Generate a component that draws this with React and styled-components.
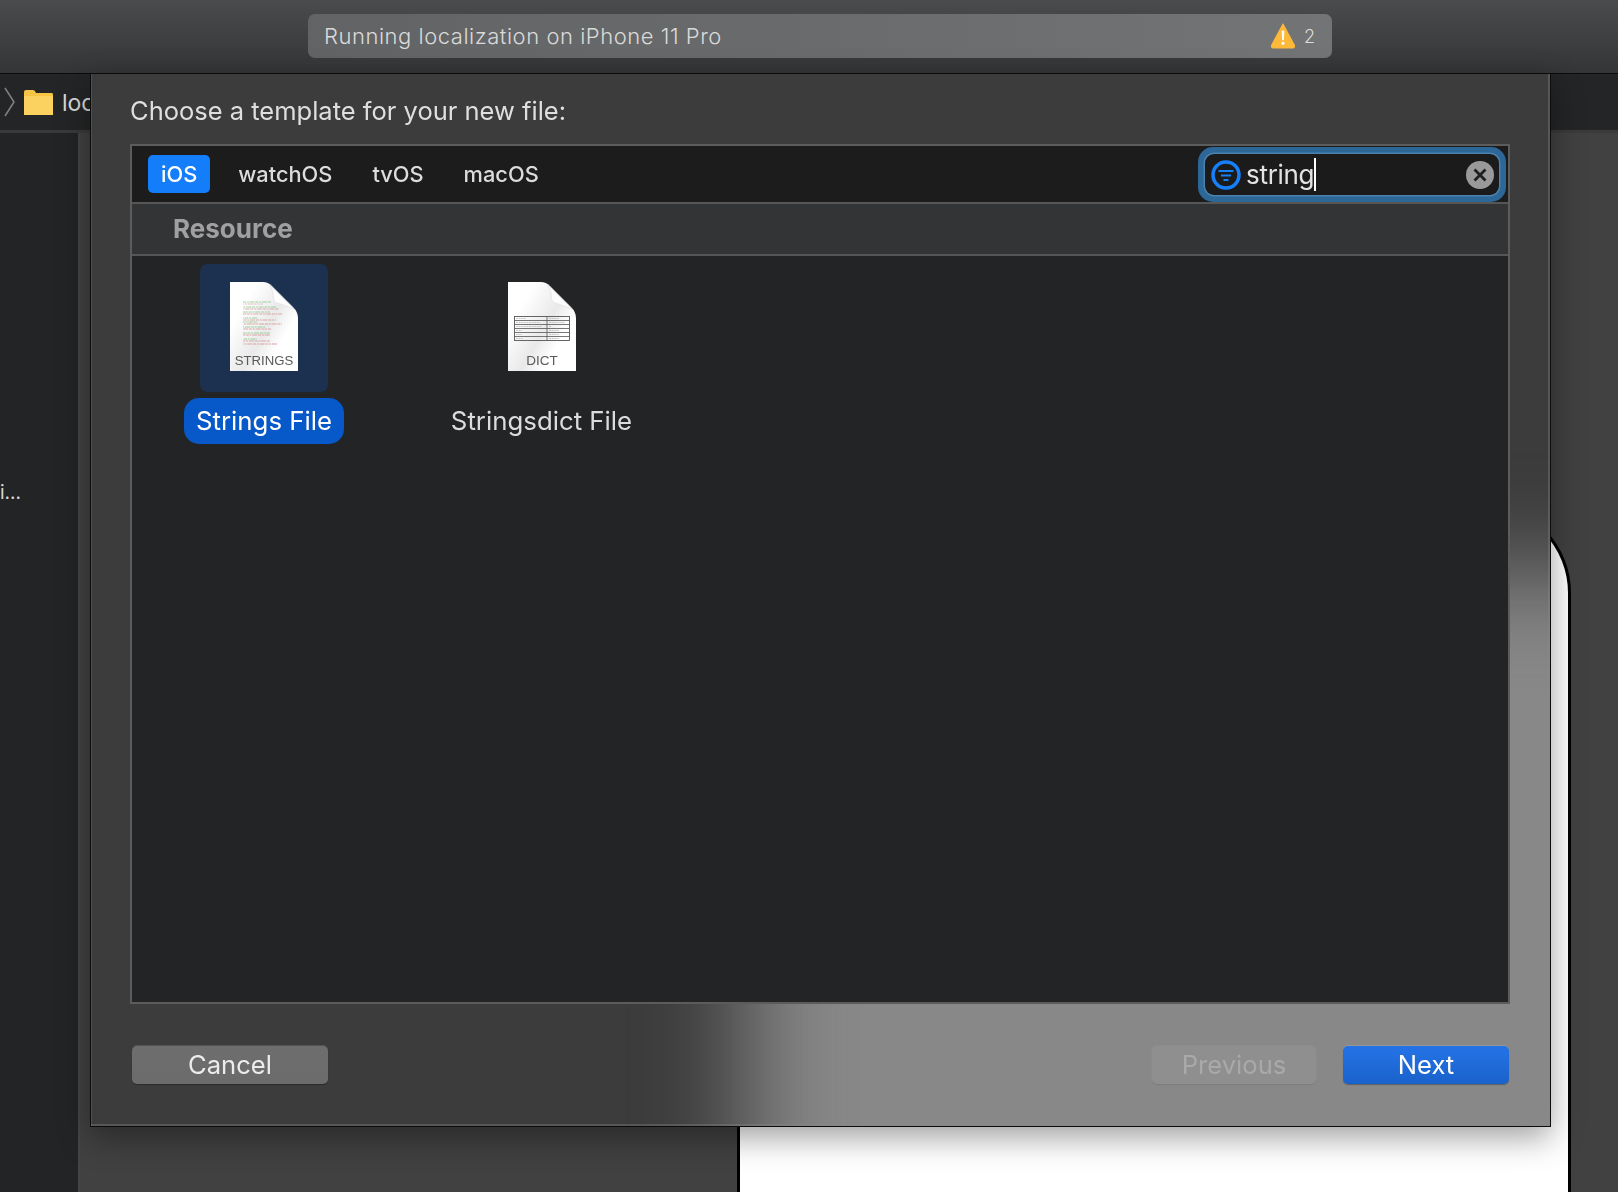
import React from "react";
import styled, { createGlobalStyle } from "styled-components";

const Global = createGlobalStyle`
  html, body { margin: 0; padding: 0; background: #414141; }
  body { font-family: Inter, "Noto Sans", "Liberation Sans", sans-serif; }
  * { box-sizing: border-box; }
`;

const Page = styled.div`
  width: 1618px; height: 1192px; display: flex; flex-direction: column; overflow: hidden; position: relative;
`;
const TitleBar = styled.header`
  height: 74px; flex: none; padding: 14px 0 0 308px;
  background: linear-gradient(180deg, #4a4b4d 0%, #3f4041 50%, #343536 100%);
  border-bottom: 1px solid #0c0c0c;
`;
const StatusPill = styled.div`
  width: 1024px; height: 44px; border-radius: 7px; display: flex; align-items: center;
  padding: 0 17px 0 16px; color: #dadada;
  background: linear-gradient(90deg, #626365 0%, #6a6b6c 50%, #737475 100%);
`;
const StatusText = styled.span`
  flex: 1; font-size: 22px; font-weight: 300; letter-spacing: 0.53px;
`;
const WarnCount = styled.span`
  font-size: 18px; font-weight: 300; margin-left: 8px; color: #dcdcdc;
`;
const Workspace = styled.main`
  flex: 1; display: flex; flex-direction: column; position: relative; min-height: 0;
`;
const PathBar = styled.nav`
  height: 59px; flex: none; display: flex; align-items: center; gap: 8px; padding: 0 0 0 4px;
  background: #242526; border-bottom: 3px solid #3a3a3b; color: #d8d8d8;
`;
const PathLabel = styled.span`
  font-size: 23px; font-weight: 400; margin-top: 2px;
`;
const Lower = styled.div`
  flex: 1; display: flex; min-height: 0;
`;
const Sidebar = styled.aside`
  width: 80px; flex: none; background: #232425; border-right: 2px solid #444546;
  color: #d8d8d8; font-size: 19px; padding-top: 348px; overflow: hidden; white-space: nowrap;
`;
const Canvas = styled.section`
  flex: 1; position: relative; background: #414141;
`;
const SideTab = styled.div`
  position: absolute; left: 1400px; top: 285px; width: 71px; height: 64px;
  background: #262626; border: 2px solid #5b5b5b; border-radius: 8px;
`;
const Device = styled.div`
  position: absolute; left: 657px; top: 370px; width: 834px; height: 900px;
  background: #fff; border: 3px solid #000; border-radius: 90px 90px 0 0;
`;
const Sheet = styled.div`
  position: absolute; left: 90px; top: 0; width: 1461px; height: 1053px;
  display: flex; flex-direction: column; overflow: hidden;
  padding: 0 40px 0 39px; background: #3c3c3c;
  border: 1px solid #0c0c0c; border-top: none;
  box-shadow: inset 0 -2px 0 rgba(255,255,255,.14), inset -2px 0 0 rgba(255,255,255,.14), inset 1px 0 0 rgba(255,255,255,.1);
  filter: drop-shadow(0 10px 16px rgba(0,0,0,.38));
  &::before {
    content: ""; position: absolute; left: 655px; top: 500px; width: 1100px; height: 900px;
    background: #888888; border-radius: 90px; filter: blur(50px);
  }
`;
const Heading = styled.h2`
  margin: 20px 0 16px; font-size: 25.5px; line-height: 34px; font-weight: 400; color: #dfdfdf;
`;
const Chooser = styled.div`
  flex: 1; position: relative; display: flex; flex-direction: column; min-height: 0;
  border: 2px solid #5c5c5d; background: #232426;
`;
const TabBar = styled.div`
  height: 58px; flex: none; display: flex; align-items: center; gap: 40px; padding: 0 2px 0 16px;
  background: #1c1c1d; border-bottom: 2px solid #565657;
`;
const Tab = styled.div`
  height: 38px; display: flex; align-items: center; font-size: 21.8px; font-weight: 500; border-radius: 5px;
  margin-top: -1px; color: ${p => (p.$active ? "#fff" : "#dcdcdc")};
  background: ${p => (p.$active ? "#147dfa" : "transparent")};
  padding: ${p => (p.$active ? "0 13px" : "0")};
  margin-right: ${p => (p.$active ? "-12px" : "0")};
`;
const Search = styled.div`
  margin-left: auto; width: 308px; height: 55px; flex: none; padding: 7px; border-radius: 15px;
  background: #2d6797; margin-top: 1px;
`;
const SearchInner = styled.div`
  height: 100%; display: flex; align-items: center; padding: 0 5px 0 6px;
  background: #1b1b1c; border-radius: 9px; box-shadow: 0 0 0 1.5px #4a82ad;
`;
const SearchText = styled.span`
  font-size: 26px; font-weight: 400; color: #e2e2e2; margin-left: 5px; letter-spacing: -0.3px;
  border-right: 2px solid #fff; line-height: 33px; margin-top: -1px;
`;
const Clear = styled.span`
  margin-left: auto; display: flex;
`;
const SectionRow = styled.div`
  height: 52px; flex: none; display: flex; align-items: center; padding: 0 0 2px 41px;
  background: #333436; border-bottom: 2px solid #565657;
  font-size: 26px; font-weight: 700; color: #a0a0a2;
`;
const Grid = styled.div`
  flex: 1; display: flex; align-items: flex-start; padding: 8px 0 0 52px;
`;
const Item = styled.div`
  width: ${p => p.$w}px; margin-right: ${p => p.$gap || 0}px; flex: none;
  display: flex; flex-direction: column; align-items: center;
`;
const IconTile = styled.div`
  width: 128px; height: 128px; display: flex; align-items: flex-start; justify-content: center; padding-top: 18px;
  border-radius: 7px; background: ${p => (p.$selected ? "#1c3150" : "transparent")};
`;
const ItemLabel = styled.div`
  margin-top: 6px; height: 46px; width: 100%; display: flex; align-items: center; justify-content: center;
  font-size: 25.8px; font-weight: 400; border-radius: 15px; white-space: nowrap; padding-bottom: 2px;
  color: ${p => (p.$selected ? "#fff" : "#dcdcdc")};
  background: ${p => (p.$selected ? "#0758c8" : "transparent")};
`;
const Footer = styled.footer`
  position: relative; display: flex; align-items: center; gap: 27px; padding: 42px 1px 42px 2px;
`;
const Btn = styled.button`
  width: ${p => p.$w}px; height: 38px; border: none; border-radius: 5px; font: inherit;
  font-size: 25.6px; font-weight: 400; padding: 0 0 2px;
  margin-left: ${p => (p.$push ? "auto" : "0")};
  color: ${p => ({ primary: "#fff", disabled: "#a9a9a9" }[p.$kind] || "#ececec")};
  background: ${p => ({
    primary: "linear-gradient(180deg,#2473e6,#1a62cb)",
    disabled: "#8f8f8f",
  }[p.$kind] || "linear-gradient(180deg,#6e6e6e,#6b6b6b)")};
  box-shadow: ${p => (p.$kind === "disabled"
    ? "0 0 0 1px rgba(255,255,255,.04), 0 1px 1px rgba(0,0,0,.12)"
    : "0 -1px 0 rgba(255,255,255,.12), 0 1px 1px rgba(0,0,0,.3)")};
`;

const Warn = () => (
  <svg width="26" height="26" viewBox="0 0 25 25">
    <path d="M12.500 1 L23.500 21.500 Q24 24 22 24 H3 Q1 24 1.500 21.500 Z" fill="#fdb93a" stroke="#fdb93a" strokeLinejoin="round" />
    <path d="M11.200 7.500 h2.600 l-.5 9 h-1.600 z" fill="#fff" />
    <circle cx="12.500" cy="19.500" r="1.500" fill="#fff" />
  </svg>
);
const Chevron = () => (
  <svg width="11" height="30" viewBox="0 0 11 30" fill="none">
    <path d="M1 1 L10 15 L1 29" stroke="#7e7e7f" strokeWidth="1.6" />
  </svg>
);
const Folder = () => (
  <svg width="31" height="27" viewBox="0 0 31 27">
    <path d="M1 3 Q1 1 3 1 H10 Q12 1 13 4 H29 Q30 4 30 6 V26 H1 Z" fill="#f7c544" />
    <rect x="1" y="7" width="29" height="19" rx="1" fill="#fbd25f" />
  </svg>
);
const FilterIcon = () => (
  <svg width="30" height="30" viewBox="0 0 30 30" fill="none" stroke="#1680fb">
    <circle cx="15" cy="15" r="13" strokeWidth="3.500" />
    <path d="M7.500 11 H22.500 M10 15.500 H20 M12.500 20 H17.500" strokeWidth="2" />
  </svg>
);
const ClearIcon = () => (
  <svg width="28" height="28" viewBox="0 0 28 28">
    <circle cx="14" cy="14" r="14" fill="#9a9a9a" />
    <path d="M8.500 8.500 L19.500 19.500 M19.500 8.500 L8.500 19.500" stroke="#1f1f1f" strokeWidth="2.800" />
  </svg>
);

const PAGE = "M0 0 H33 Q38 0 42 4 L63 25 Q68 30 68 36 V89 H0 Z";
const DocPage = ({ id, children, label, size }) => (
  <svg width="68" height="90" viewBox="0 0 68 90">
    <defs>
      <linearGradient id={id} x1="0.4" y1="0" x2="0.95" y2="0.42">
        <stop offset="0" stopColor="#fff" />
        <stop offset="0.62" stopColor="#e9e9e9" />
        <stop offset="1" stopColor="#fff" />
      </linearGradient>
    </defs>
    <path d={PAGE} fill={`url(#${id})`} />
    <path d="M40 3 L64 27 Q52 22 47 21 Q44 20 43.500 17 Q44 9 40 3 Z" fill="#fdfdfd" stroke="#dedede" strokeWidth="0.6" />
    {children}
    <text x="34" y="83" textAnchor="middle" fontFamily="Liberation Sans, sans-serif" fontSize={size} fill="#5a5a5a">{label}</text>
  </svg>
);

const codeRows = [
  [20, 13, 28, "#6dbb6d"], [22, 13, 20, "#c9a0a0"], [25, 13, 34, "#6dbb6d"], [27, 13, 36, "#cf8080"],
  [30, 13, 27, "#6dbb6d"], [32, 13, 39, "#cf8080"], [36, 13, 15, "#6dbb6d"], [38, 13, 33, "#cf8080"],
  [40, 13, 14, "#6dbb6d"], [42, 13, 39, "#d07878"], [45, 13, 22, "#6dbb6d"], [47, 13, 28, "#cf8080"],
  [51, 13, 27, "#6dbb6d"], [53, 13, 27, "#d07878"], [57, 13, 14, "#6dbb6d"], [59, 13, 27, "#cf8080"], [62, 13, 34, "#d07878"],
];
const StringsIcon = () => (
  <DocPage id="docA" label="STRINGS" size={13.2}>
    {codeRows.map(([y, x, w, c], i) => (
      <line key={i} x1={x} x2={x + w} y1={y} y2={y} stroke={c} strokeWidth="0.65"
        strokeDasharray="3 0.8 2 0.8 5 0.8" strokeDashoffset={i * 1.7} />
    ))}
  </DocPage>
);
const DictIcon = () => (
  <DocPage id="docB" label="DICT" size={13.5}>
    <rect x="6.500" y="34.500" width="55" height="24" fill="none" stroke="#555" strokeWidth="0.9" />
    {[38.5, 42.5, 46.5, 50.5, 54.5].map(y => (
      <line key={y} x1="6.500" x2="61.500" y1={y} y2={y} stroke="#555" strokeWidth="0.8" />
    ))}
    <line x1="39" x2="39" y1="34.500" y2="58.500" stroke="#555" strokeWidth="0.8" />
    {[36.5, 40.5, 44.5, 48.5, 52.5, 56.5].map((y, i) => (
      <g key={y}>
        <line x1="8" x2={8 + [10, 24, 26, 6, 6, 7][i]} y1={y} y2={y} stroke="#b5b5b5" strokeWidth="0.7" strokeDasharray="2 0.6" />
        <line x1="41" x2={41 + [10, 16, 2, 10, 10, 10][i]} y1={y} y2={y} stroke="#b5b5b5" strokeWidth="0.7" strokeDasharray="2 0.6" />
      </g>
    ))}
  </DocPage>
);

export default function App() {
  return (
    <Page>
      <Global />
      <TitleBar>
        <StatusPill>
          <StatusText>Running localization on iPhone 11 Pro</StatusText>
          <Warn />
          <WarnCount>2</WarnCount>
        </StatusPill>
      </TitleBar>
      <Workspace>
        <PathBar>
          <Chevron />
          <Folder />
          <PathLabel>loc</PathLabel>
        </PathBar>
        <Lower>
          <Sidebar>i...</Sidebar>
          <Canvas>
            <SideTab />
            <Device />
          </Canvas>
        </Lower>
        <Sheet>
          <Heading>Choose a template for your new file:</Heading>
          <Chooser>
            <TabBar>
              <Tab $active>iOS</Tab>
              <Tab>watchOS</Tab>
              <Tab>tvOS</Tab>
              <Tab>macOS</Tab>
              <Search>
                <SearchInner>
                  <FilterIcon />
                  <SearchText>string</SearchText>
                  <Clear><ClearIcon /></Clear>
                </SearchInner>
              </Search>
            </TabBar>
            <SectionRow>Resource</SectionRow>
            <Grid>
              <Item $w={160} $gap={107}>
                <IconTile $selected><StringsIcon /></IconTile>
                <ItemLabel $selected>Strings File</ItemLabel>
              </Item>
              <Item $w={181}>
                <IconTile><DictIcon /></IconTile>
                <ItemLabel>Stringsdict File</ItemLabel>
              </Item>
            </Grid>
          </Chooser>
          <Footer>
            <Btn $w={196}>Cancel</Btn>
            <Btn $w={164} $kind="disabled" $push>Previous</Btn>
            <Btn $w={166} $kind="primary">Next</Btn>
          </Footer>
        </Sheet>
      </Workspace>
    </Page>
  );
}
